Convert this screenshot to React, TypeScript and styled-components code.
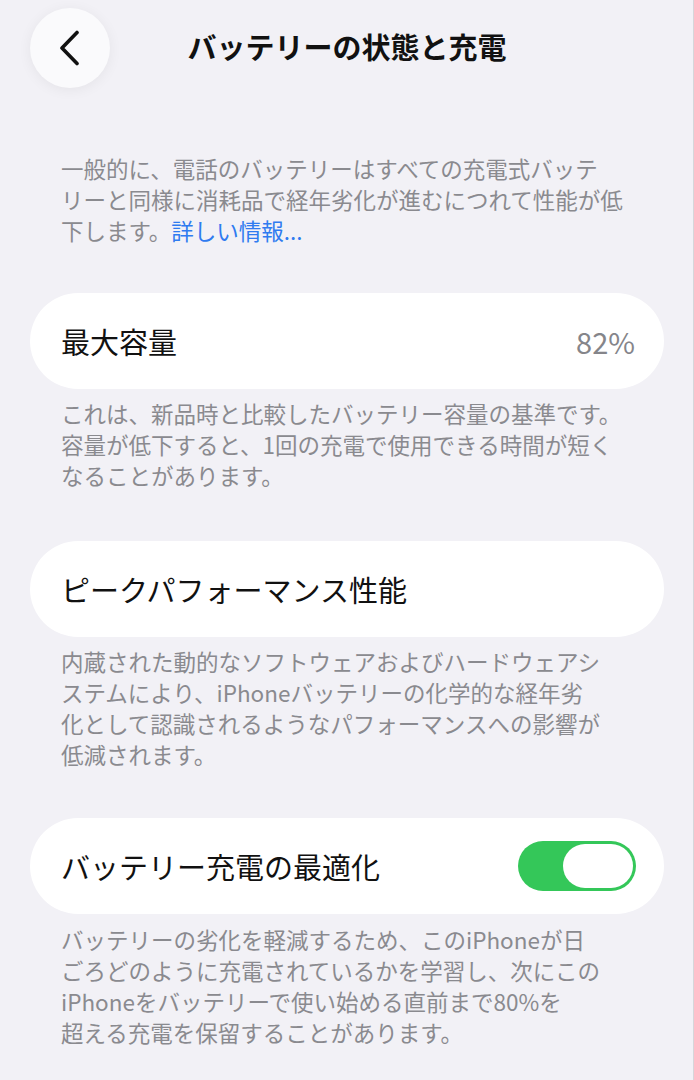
import React from "react";
import styled, { createGlobalStyle } from "styled-components";

const Global = createGlobalStyle`
  html, body {
    margin: 0;
    padding: 0;
    background: #f2f1f6;
  }
  body {
    font-family: "Noto Sans CJK JP", "Noto Sans", sans-serif;
    -webkit-font-smoothing: antialiased;
  }
`;

const Page = styled.div`
  width: 694px;
  min-height: 1080px;
  box-sizing: border-box;
  background: #f2f1f6;
  padding: 0 29px 0 30px;
  border-right: 1px solid #d6d6da;
  position: relative;
`;

const Header = styled.header`
  display: grid;
  grid-template-columns: 80px 1fr 80px;
  align-items: center;
  padding-top: 8px;
  height: 80px;
`;

const BackButton = styled.button`
  width: 80px;
  height: 80px;
  border-radius: 50%;
  border: none;
  padding: 0;
  background: #fafafc;
  box-shadow: 0 2px 14px rgba(0, 0, 0, 0.06);
  display: flex;
  align-items: center;
  justify-content: center;
`;

const Title = styled.h1`
  margin: 0 0 3px;
  text-align: center;
  font-size: 29px;
  font-weight: 700;
  color: #111;
  letter-spacing: 0;
  line-height: 1;
`;

const Note = styled.p<{ $top: number }>`
  margin: ${(p) => p.$top}px 0 0;
  padding-left: 31px;
  font-size: 22.5px;
  line-height: 31px;
  color: #8a8a8f;
  white-space: nowrap;
`;

const Link = styled.span`
  color: #2f7bf0;
`;

const Card = styled.div<{ $top: number }>`
  margin-top: ${(p) => p.$top}px;
  height: 96px;
  border-radius: 48px;
  background: #ffffff;
  display: flex;
  align-items: center;
  justify-content: space-between;
  padding: 0 29px 0 31px;
`;

const Label = styled.span`
  font-size: 29px;
  color: #111;
  line-height: 1;
`;

const Value = styled.span`
  font-size: 29px;
  color: #85858a;
  line-height: 1;
`;

const Toggle = styled.div<{ $on: boolean }>`
  width: 118px;
  height: 50px;
  border-radius: 25px;
  background: ${(p) => (p.$on ? "#34c759" : "#e5e5ea")};
  display: flex;
  align-items: center;
  justify-content: ${(p) => (p.$on ? "flex-end" : "flex-start")};
  padding: 0 3px;
  box-sizing: border-box;
  margin-right: -1px;
`;

const Knob = styled.div`
  width: 70px;
  height: 44px;
  border-radius: 22px;
  background: #ffffff;
`;

export default function App() {
  return (
    <>
      <Global />
      <Page>
        <Header>
          <BackButton aria-label="戻る">
            <svg width="24" height="36" viewBox="0 0 24 36" fill="none">
              <path
                d="M19 2.5 L4 18 L19 33.5"
                stroke="#111"
                strokeWidth="3.6"
                strokeLinecap="round"
                strokeLinejoin="round"
              />
            </svg>
          </BackButton>
          <Title>バッテリーの状態と充電</Title>
          <span />
        </Header>

        <Note $top={65}>
          一般的に、電話のバッテリーはすべての充電式バッテ
          <br />
          リーと同様に消耗品で経年劣化が進むにつれて性能が低
          <br />
          下します。<Link>詳しい情報...</Link>
        </Note>

        <Card $top={47}>
          <Label>最大容量</Label>
          <Value>82%</Value>
        </Card>
        <Note $top={9}>
          これは、新品時と比較したバッテリー容量の基準です。
          <br />
          容量が低下すると、1回の充電で使用できる時間が短く
          <br />
          なることがあります。
        </Note>

        <Card $top={50}>
          <Label>ピークパフォーマンス性能</Label>
        </Card>
        <Note $top={9}>
          内蔵された動的なソフトウェアおよびハードウェアシ
          <br />
          ステムにより、iPhoneバッテリーの化学的な経年劣
          <br />
          化として認識されるようなパフォーマンスへの影響が
          <br />
          低減されます。
        </Note>

        <Card $top={48}>
          <Label>バッテリー充電の最適化</Label>
          <Toggle $on>
            <Knob />
          </Toggle>
        </Card>
        <Note $top={10}>
          バッテリーの劣化を軽減するため、このiPhoneが日
          <br />
          ごろどのように充電されているかを学習し、次にこの
          <br />
          iPhoneをバッテリーで使い始める直前まで80%を
          <br />
          超える充電を保留することがあります。
        </Note>
      </Page>
    </>
  );
}
